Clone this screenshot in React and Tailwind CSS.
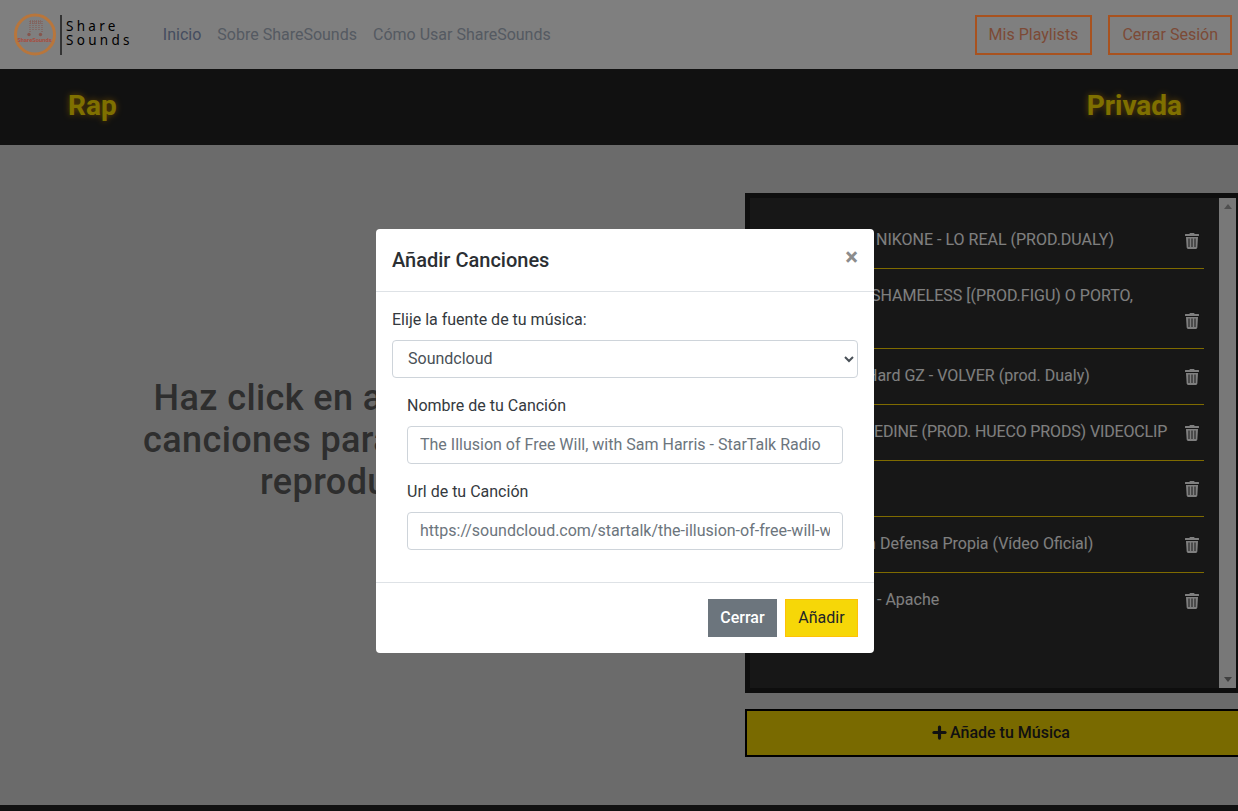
import React from "react";
import { Plus } from "lucide-react";

function TrashIcon() {
  return (
    <svg width="14" height="16" viewBox="0 0 448 512" fill="#ffffff" className="shrink-0">
      <path d="M432 32H312l-9.4-18.7A24 24 0 0 0 281.100 0H166.800a23.700 23.700 0 0 0-21.400 13.300L136 32H16A16 16 0 0 0 0 48v32a16 16 0 0 0 16 16h416a16 16 0 0 0 16-16V48a16 16 0 0 0-16-16zM53.200 467a48 48 0 0 0 47.900 45h245.800a48 48 0 0 0 47.900-45L416 128H32zM304 176h32v272h-32zm-96 0h32v272h-32zm-96 0h32v272h-32z" />
    </svg>
  );
}

const rows = [
  { text: "NIKONE - LO REAL (PROD.DUALY)", pl: "pl-[106px] pt-[16px]", h: "h-[57px] pb-[19px] border-b border-[#ffd700]" },
  { text: "SHAMELESS [(PROD.FIGU) O PORTO,", pl: "pl-[101px] pt-[15px]", h: "h-[80px] pb-[19px] border-b border-[#ffd700]" },
  { text: "Hard GZ - VOLVER (prod. Dualy)", pl: "pl-[96px] pt-[15px]", h: "h-[56px] pb-[19px] border-b border-[#ffd700]" },
  { text: "EDINE (PROD. HUECO PRODS) VIDEOCLIP", pl: "pl-[104px] pt-[15px] tracking-[-0.14px]", h: "h-[56px] pb-[19px] border-b border-[#ffd700]" },
  { text: "", pl: "pl-[104px] pt-[15px]", h: "h-[56px] pb-[19px] border-b border-[#ffd700]" },
  { text: "En Defensa Propia (Vídeo Oficial)", pl: "pl-[88px] pt-[15px]", h: "h-[56px] pb-[19px] border-b border-[#ffd700]" },
  { text: "- Apache", pl: "pl-[107px] pt-[15px]", h: "h-[56px] pb-[20px]" },
];

function Row({ r }) {
  return (
    <div className={`${r.h} flex items-end justify-between pr-[5px]`}>
      <span className={`${r.pl} mb-auto text-base leading-6 whitespace-pre text-white`}>{r.text}</span>
      <TrashIcon />
    </div>
  );
}

export default function App() {
  return (
    <div className="relative h-[811px] w-[1238px] overflow-hidden bg-[#d6d6d6] text-[#212529] [font-family:Roboto,sans-serif]">
      <nav className="flex h-[69px] items-center justify-between bg-white pl-[14px] pr-[6px]">
        <div className="flex items-center">
          <svg width="46" height="46" viewBox="0 0 46 46" className="relative z-10 shrink-0">
            <circle cx="21" cy="22.500" r="19.500" fill="none" stroke="#b8763c" strokeWidth="3" />
            <g fill="none" stroke="#85564e" strokeWidth="1" strokeDasharray="1 1">
              <path d="M16 9h12M16 11h12M16 9v12M28 9v12M19 9v9M22 9v9M25 9v9" />
            </g>
            <circle cx="15" cy="22.500" r="1.700" fill="#85564e" />
            <circle cx="26.500" cy="22.500" r="1.700" fill="#85564e" />
            <text x="20.500" y="30" textAnchor="middle" fontSize="5.800" fontWeight="700" fill="#a84e40" fontFamily="Roboto, sans-serif">ShareSounds</text>
          </svg>
          <div className="flex h-[40px] items-center border-l-2 border-[#666] pl-[4px]">
            <div className="pb-[4px] text-[13.500px] leading-[14px] tracking-[3.300px] text-black [font-family:'Noto_Sans',sans-serif]">
              <div>Share</div>
              <div>Sounds</div>
            </div>
          </div>
          <div className="ml-[30px] flex gap-4 text-base">
            <span className="text-[#8a9ac0]">Inicio</span>
            <span className="text-[#aab4c4]">Sobre ShareSounds</span>
            <span className="text-[#aab4c4]">Cómo Usar ShareSounds</span>
          </div>
        </div>
        <div className="flex gap-4 text-base">
          <button className="relative z-10 h-[40px] border-2 border-[#a8521f] px-3 text-[#7c4a36]">Mis Playlists</button>
          <button className="relative z-10 h-[40px] border-2 border-[#a8521f] px-3 text-[#7c4a36]">Cerrar Sesión</button>
        </div>
      </nav>

      <header className="flex h-[76px] items-center bg-[#222222] pb-[3px] text-[28px] font-bold text-[#ffe000] [text-shadow:0_0_6px_#c98c00]">
        <span className="ml-[68px]">Rap</span>
        <span className="ml-[970px]">Privada</span>
      </header>

      <main className="flex h-[660px] bg-[#d6d6d6]">
        <div className="flex w-[745px] shrink-0 items-start justify-center pt-[232px]">
          <p className="mr-[7px] text-center text-[36px] leading-[42px] font-medium tracking-[0.4px] whitespace-nowrap text-[#5c5c5c]">
            Haz click en alguna de tus
            <br />
            canciones para comenzar a
            <br />
            reproducirlas
          </p>
        </div>
        <div className="mt-[48px] w-[512px] shrink-0">
          <div className="flex h-[500px] w-[496px] border-[5px] border-[#1c1c1c] bg-[#2e2e2e] pl-[20px]">
            <div className="flex-1 pt-[14px] pr-[15px]">
              {rows.map((r, i) => (
                <Row key={i} r={r} />
              ))}
            </div>
            <div className="flex w-[17px] shrink-0 flex-col items-center justify-between bg-[#f1f1f1] py-[6px]">
              <span className="border-x-[4px] border-b-[5px] border-x-transparent border-b-[#a0a0a0]" />
              <span className="border-x-[4px] border-t-[5px] border-x-transparent border-t-[#808080]" />
            </div>
          </div>
          <button className="mt-4 flex h-[48px] w-[510px] items-center justify-center gap-[1px] border-[2px] border-black bg-[#f3d400] pb-[1px] font-medium text-[#222]">
            <Plus size={19} strokeWidth={4} />
            Añade tu Música
          </button>
        </div>
      </main>
      <footer className="h-[6px] bg-[#222222]" />

      <div className="absolute inset-0 z-[5] bg-black/50" />

      <div className="absolute left-[376px] top-[229px] z-20 w-[498px] rounded-[4px] bg-white">
        <div className="flex h-[63px] items-center justify-between border-b border-[#dee2e6] px-4 pb-[1px]">
          <h5 className="text-[20px] leading-[30px] font-medium text-[#2b2f33]">Añadir Canciones</h5>
          <span className="mt-[-6px] text-[24px] leading-none font-bold text-[#8c8c8c]">×</span>
        </div>
        <div className="px-4 pt-4 pb-[32px] text-[#34393e]">
          <label className="block leading-6">Elije la fuente de tu música:</label>
          <select defaultValue="Soundcloud" className="mt-2 block h-[38px] w-full rounded-[4px] border border-[#ced4da] bg-white pr-[1px] pb-[2px] pl-[11px] text-[#495057]">
            <option>Soundcloud</option>
          </select>
          <div className="mt-4 px-[15px]">
            <label className="block leading-6">Nombre de tu Canción</label>
            <input readOnly placeholder="The Illusion of Free Will, with Sam Harris - StarTalk Radio" className="mt-2 block h-[38px] w-full rounded-[4px] border border-[#ced4da] bg-white px-3 pb-[2px] placeholder:text-[#6c757d]" />
            <label className="mt-4 block leading-6">Url de tu Canción</label>
            <input readOnly placeholder="https://soundcloud.com/startalk/the-illusion-of-free-will-with-sam-harris" className="mt-2 block h-[38px] w-full rounded-[4px] border border-[#ced4da] bg-white px-3 pb-[2px] placeholder:text-[#6c757d]" />
          </div>
        </div>
        <div className="flex h-[71px] items-center justify-end gap-2 border-t border-[#dee2e6] px-4">
          <button className="h-[38px] w-[69px] bg-[#6c757d] font-medium text-white">Cerrar</button>
          <button className="h-[38px] w-[73px] border border-[#ffc107] bg-[#f6d708] text-[#212529]">Añadir</button>
        </div>
      </div>
    </div>
  );
}
